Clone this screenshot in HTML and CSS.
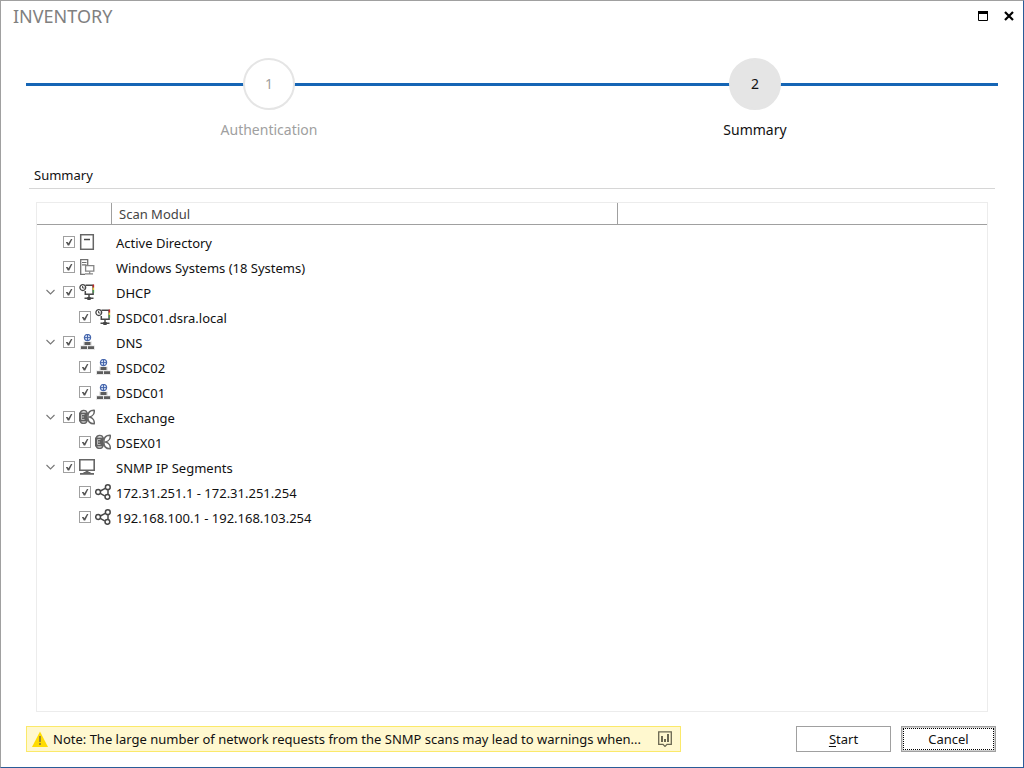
FILE: index.html
```html
<!DOCTYPE html>
<html lang="en">
<head>
<meta charset="utf-8">
<meta name="viewport" content="width=device-width, initial-scale=1">
<title>Inventory</title>
<link rel="stylesheet" href="styles.css">
</head>
<body>
<svg class="sprite" aria-hidden="true">
  <symbol id="directory" viewBox="0 0 16 16"><rect x="1.7" y=".7" width="12.6" height="14.6" fill="#fff" stroke="#666" stroke-width="1.5"/><path d="M5 5.5h6" stroke="#444" stroke-width="1.5"/></symbol>
  <symbol id="systems" viewBox="0 0 16 16"><path d="M6 15.3H1.7V.7h7V6" fill="none" stroke="#707070" stroke-width="1.3"/><path d="M3 3.5h4.5M3 5.8h4.5" stroke="#707070" stroke-width="1.2"/><path d="M6.6 6.6h8.2v5.6H6.6z" fill="#fff" stroke="#858585" stroke-width="1.3"/><path d="M10.7 12.5v2M6 14.9h8" stroke="#858585" stroke-width="1.2"/></symbol>
  <symbol id="dhcp" viewBox="0 0 16 16"><path d="M6.5 1.2h7.6v9H6.3V7M10 10.5v4M5.5 14.2h9" fill="none" stroke="#484848" stroke-width="1.5"/><path d="M14.4 .6v3" stroke="#c62828" stroke-width="1.5"/><path d="M14.4 3.6v2.5" stroke="#e3c63b" stroke-width="1.5"/><path d="M14.4 6.1v2.6" stroke="#4b9950" stroke-width="1.5"/><circle cx="3.8" cy="3.6" r="2.9" fill="#fff" stroke="#484848" stroke-width="1.3"/><path d="M3.6 2v2h2" fill="none" stroke="#444"/><path d="M8.3 13h3.4v3H8.3z" fill="#444"/></symbol>
  <symbol id="dns" viewBox="0 0 16 16"><path d="M4 7.6h9v4h3v4.4H1v-4.4h3z" fill="#e6e6e6"/><circle cx="8.5" cy="3.6" r="3.1" fill="#dbe4f6" stroke="#4667ad" stroke-width="1.2"/><path d="M5.4 3.6h6.2M8.5 .5v6.2" stroke="#4667ad"/><path d="M5.5 8h6v3h-6zM2 12.2h6v2.8H2zM9 12.2h6v2.8H9z" fill="#5c5c5c"/></symbol>
  <symbol id="exchange" viewBox="0 0 16 16"><g fill="#fff" stroke="#666" stroke-width="1.5" stroke-linejoin="round"><path d="M1.5 3.5C2 1.2 6.800 .6 8 3.500L9.500 7.500 8 12C6.800 15.300 2 14.800 1.500 12.500z"/><path d="M9 7.500C8.600 3.800 11 1 15.200 1.200 15.600 4.200 14 7.200 10.500 8 14 8.800 15.600 11.800 15.200 14.800 11 15 8.600 12.200 9 8.500z"/></g><path d="M0 3.500h8v9H0z" fill="#606060"/><path d="M5.500 5.500h-3v5h3M2.500 8h2.500" fill="none" stroke="#bbb"/></symbol>
  <symbol id="monitor" viewBox="0 0 16 16"><path d="M.8 .8h14.400v10.400H.8z" fill="#fff" stroke="#666" stroke-width="1.600"/><path d="M6.500 11.500h3v1.500h2v1H15v1.800H1V14h3.500v-1h2z" fill="#666"/></symbol>
  <symbol id="segment" viewBox="0 0 16 16"><g fill="none" stroke="#484848" stroke-width="1.5"><path d="m5.300 7 5-2.700M5.200 9.300l4.500 2.500M13 5.800v4.500"/><circle cx="3.100" cy="8" r="2.400"/><circle cx="12.800" cy="3.200" r="2.400"/><circle cx="12.400" cy="12.800" r="2.400"/></g></symbol>
  <symbol id="chevron" viewBox="0 0 9 6"><path d="M.5 1 4.5 5l4-4" fill="none" stroke="#777" stroke-width="1.100"/></symbol>
</svg>
<div class="window">
  <header class="titlebar">
    <h1 class="title">INVENTORY</h1>
    <div class="window-actions">
      <button class="window-button" type="button" aria-label="Maximize"><svg width="10" height="10" viewBox="0 0 10 10"><path d="M.5 1.5h9v8h-9z" fill="none" stroke="#000"/><path d="M0 0h10v3H0z"/></svg></button>
      <button class="window-button" type="button" aria-label="Close"><svg width="10" height="10" viewBox="0 0 10 10"><path d="m1 1 8 8M9 1 1 9" stroke="#000" stroke-width="2.2"/></svg></button>
    </div>
  </header>
  <ol class="steps">
    <li class="step"><span class="step-number">1</span><span class="step-label">Authentication</span></li>
    <li class="step step-current" aria-current="step"><span class="step-number">2</span><span class="step-label">Summary</span></li>
  </ol>
  <main class="content">
    <h2 class="section-title">Summary</h2>
    <div class="grid">
      <table class="tree">
        <colgroup><col class="col-select"><col class="col-module"><col></colgroup>
        <thead><tr><th></th><th scope="col">Scan Modul</th><th></th></tr></thead>
        <tbody>
          <tr><td><div class="node"><span class="toggle"></span><input class="check" type="checkbox" id="m1" checked><svg class="icon"><use href="#directory"/></svg></div></td><td><label for="m1">Active Directory</label></td><td></td></tr>
          <tr><td><div class="node"><span class="toggle"></span><input class="check" type="checkbox" id="m2" checked><svg class="icon"><use href="#systems"/></svg></div></td><td><label for="m2">Windows Systems (18 Systems)</label></td><td></td></tr>
          <tr><td><div class="node"><button class="toggle" type="button" aria-label="Collapse DHCP"><svg class="chevron"><use href="#chevron"/></svg></button><input class="check" type="checkbox" id="m3" checked><svg class="icon"><use href="#dhcp"/></svg></div></td><td><label for="m3">DHCP</label></td><td></td></tr>
          <tr><td><div class="node node-child"><input class="check" type="checkbox" id="m4" checked><svg class="icon"><use href="#dhcp"/></svg></div></td><td><label for="m4">DSDC01.dsra.local</label></td><td></td></tr>
          <tr><td><div class="node"><button class="toggle" type="button" aria-label="Collapse DNS"><svg class="chevron"><use href="#chevron"/></svg></button><input class="check" type="checkbox" id="m5" checked><svg class="icon"><use href="#dns"/></svg></div></td><td><label for="m5">DNS</label></td><td></td></tr>
          <tr><td><div class="node node-child"><input class="check" type="checkbox" id="m6" checked><svg class="icon"><use href="#dns"/></svg></div></td><td><label for="m6">DSDC02</label></td><td></td></tr>
          <tr><td><div class="node node-child"><input class="check" type="checkbox" id="m7" checked><svg class="icon"><use href="#dns"/></svg></div></td><td><label for="m7">DSDC01</label></td><td></td></tr>
          <tr><td><div class="node"><button class="toggle" type="button" aria-label="Collapse Exchange"><svg class="chevron"><use href="#chevron"/></svg></button><input class="check" type="checkbox" id="m8" checked><svg class="icon"><use href="#exchange"/></svg></div></td><td><label for="m8">Exchange</label></td><td></td></tr>
          <tr><td><div class="node node-child"><input class="check" type="checkbox" id="m9" checked><svg class="icon"><use href="#exchange"/></svg></div></td><td><label for="m9">DSEX01</label></td><td></td></tr>
          <tr><td><div class="node"><button class="toggle" type="button" aria-label="Collapse SNMP IP Segments"><svg class="chevron"><use href="#chevron"/></svg></button><input class="check" type="checkbox" id="m10" checked><svg class="icon"><use href="#monitor"/></svg></div></td><td><label for="m10">SNMP IP Segments</label></td><td></td></tr>
          <tr><td><div class="node node-child"><input class="check" type="checkbox" id="m11" checked><svg class="icon"><use href="#segment"/></svg></div></td><td><label for="m11">172.31.251.1 - 172.31.251.254</label></td><td></td></tr>
          <tr><td><div class="node node-child"><input class="check" type="checkbox" id="m12" checked><svg class="icon"><use href="#segment"/></svg></div></td><td><label for="m12">192.168.100.1 - 192.168.103.254</label></td><td></td></tr>
        </tbody>
      </table>
    </div>
  </main>
  <footer class="footer">
    <div class="note" role="status">
      <svg class="icon" viewBox="0 0 16 16"><path d="M8 .5 16 16H0z" fill="#ffdc00"/><path d="M7 5h2v6H7zM7 12h2v2H7z" fill="#a08c30"/></svg>
      <span class="note-text">Note: The large number of network requests from the SNMP scans may lead to warnings when...</span>
      <button class="note-more" type="button" aria-label="Show full note"><svg class="icon" viewBox="0 0 16 16"><path d="M1.700 .8h12.600v12.600H10L8 15.400l-2-2H1.700z" fill="none" stroke="#6a6752" stroke-width="1.300"/><path d="M4 5h2v6H4zM7 8h2v3H7zM10 3h2v8h-2z" fill="#6a6752"/></svg></button>
    </div>
    <div class="actions">
      <button class="button" type="button" accesskey="s"><u>S</u>tart</button>
      <button class="button button-focused" type="button">Cancel</button>
    </div>
  </footer>
</div>
</body>
</html>
```
FILE: styles.css
```css
* { box-sizing: border-box; }

body {
  margin: 0;
  background: #fff;
  color: #111;
  font: 13px/20px "Noto Sans", "Open Sans", sans-serif;
}

button {
  padding: 0;
  border: 0;
  background: none;
  color: inherit;
  font: inherit;
}

.sprite { display: none; }

.window {
  display: flex;
  flex-direction: column;
  min-height: 100vh;
  border: 1px solid #a0a0a0;
  border-right-color: #2a5c98;
  border-bottom-color: #2a5c98;
}

.titlebar {
  display: flex;
  align-items: center;
  justify-content: space-between;
  height: 30px;
  padding: 0 6px 0 12px;
}

.title {
  margin: 0;
  color: #808080;
  font-size: 18px;
  font-weight: 400;
}

.window-actions {
  display: flex;
  gap: 10px;
}

.window-button {
  display: flex;
  align-items: center;
  justify-content: center;
  width: 16px;
  height: 16px;
}

.steps {
  display: grid;
  grid-template-columns: 1fr 1fr;
  margin: 27px 25px 0;
  padding: 0;
  list-style: none;
  background: linear-gradient(#1565b5, #1565b5) 0 25px / 100% 3px no-repeat;
}

.step {
  display: flex;
  flex-direction: column;
  align-items: center;
  gap: 10px;
  color: #a0a0a0;
  font-size: 14px;
}

.step-number {
  display: flex;
  align-items: center;
  justify-content: center;
  width: 52px;
  height: 52px;
  border: 2px solid #e5e5e5;
  border-radius: 50%;
  background: #fff;
}

.step-current { color: #111; }
.step-current .step-number { background: #e5e5e5; }

.content {
  display: flex;
  flex: 1;
  flex-direction: column;
  margin: 25px 28px 0;
}

.section-title {
  margin: 0 0 13px;
  padding: 0 5px 3px;
  border-bottom: 1px solid #d6d6d6;
  font-size: 13px;
  font-weight: 400;
}

.grid {
  flex: 1;
  margin: 0 7px;
  border: 1px solid #ececec;
}

.tree {
  width: 100%;
  border-collapse: separate;
  border-spacing: 0;
  table-layout: fixed;
}

.col-select { width: 75px; }
.col-module { width: 506px; }

.tree th {
  height: 22px;
  padding: 2px 7px 0;
  border-right: 1px solid #a0a0a0;
  border-bottom: 1px solid #a0a0a0;
  color: #444;
  font-weight: 400;
  line-height: 19px;
  text-align: left;
}

.tree th:last-child { border-right: 0; }

.tree tbody::before {
  display: block;
  height: 5px;
  content: "";
}

.tree td {
  height: 25px;
  padding: 0;
}

.tree td:nth-child(2) { padding-left: 4px; }

.node {
  display: flex;
  align-items: center;
  gap: 4px;
  padding: 0 0 1px 9px;
}

.node-child { padding-left: 42px; }

.toggle {
  display: flex;
  width: 9px;
  margin-right: 4px;
}

.chevron {
  width: 9px;
  height: 6px;
}

.check {
  width: 12px;
  height: 12px;
  margin: 0;
  border: 1px solid #a0a0a0;
  background: #fff;
  appearance: none;
}

.check:checked::after {
  display: block;
  width: 10px;
  height: 10px;
  background: #555;
  clip-path: polygon(18% 50%, 36% 50%, 44% 62%, 70% 20%, 84% 20%, 52% 86%, 38% 86%);
  content: "";
}

.icon {
  display: block;
  flex: none;
  width: 16px;
  height: 16px;
}

.footer {
  display: flex;
  align-items: center;
  justify-content: space-between;
  gap: 115px;
  padding: 14px 27px 15px 25px;
}

.note {
  display: flex;
  flex: 1;
  align-items: center;
  gap: 5px;
  min-width: 0;
  height: 26px;
  padding: 0 7px 0 5px;
  border: 1px solid #fbe96a;
  background: #fff8cf;
}

.note-text {
  flex: 1;
  overflow: hidden;
  text-overflow: ellipsis;
  white-space: nowrap;
}

.actions {
  display: flex;
  gap: 10px;
}

.button {
  width: 95px;
  height: 26px;
  border: 1px solid #a0a0a0;
  background: #fff;
}

.button u { text-underline-offset: 2px; }

.button-focused {
  box-shadow: inset 0 0 0 1px #d0d0d0;
  outline: 1px dotted #000;
  outline-offset: -3px;
}
```
